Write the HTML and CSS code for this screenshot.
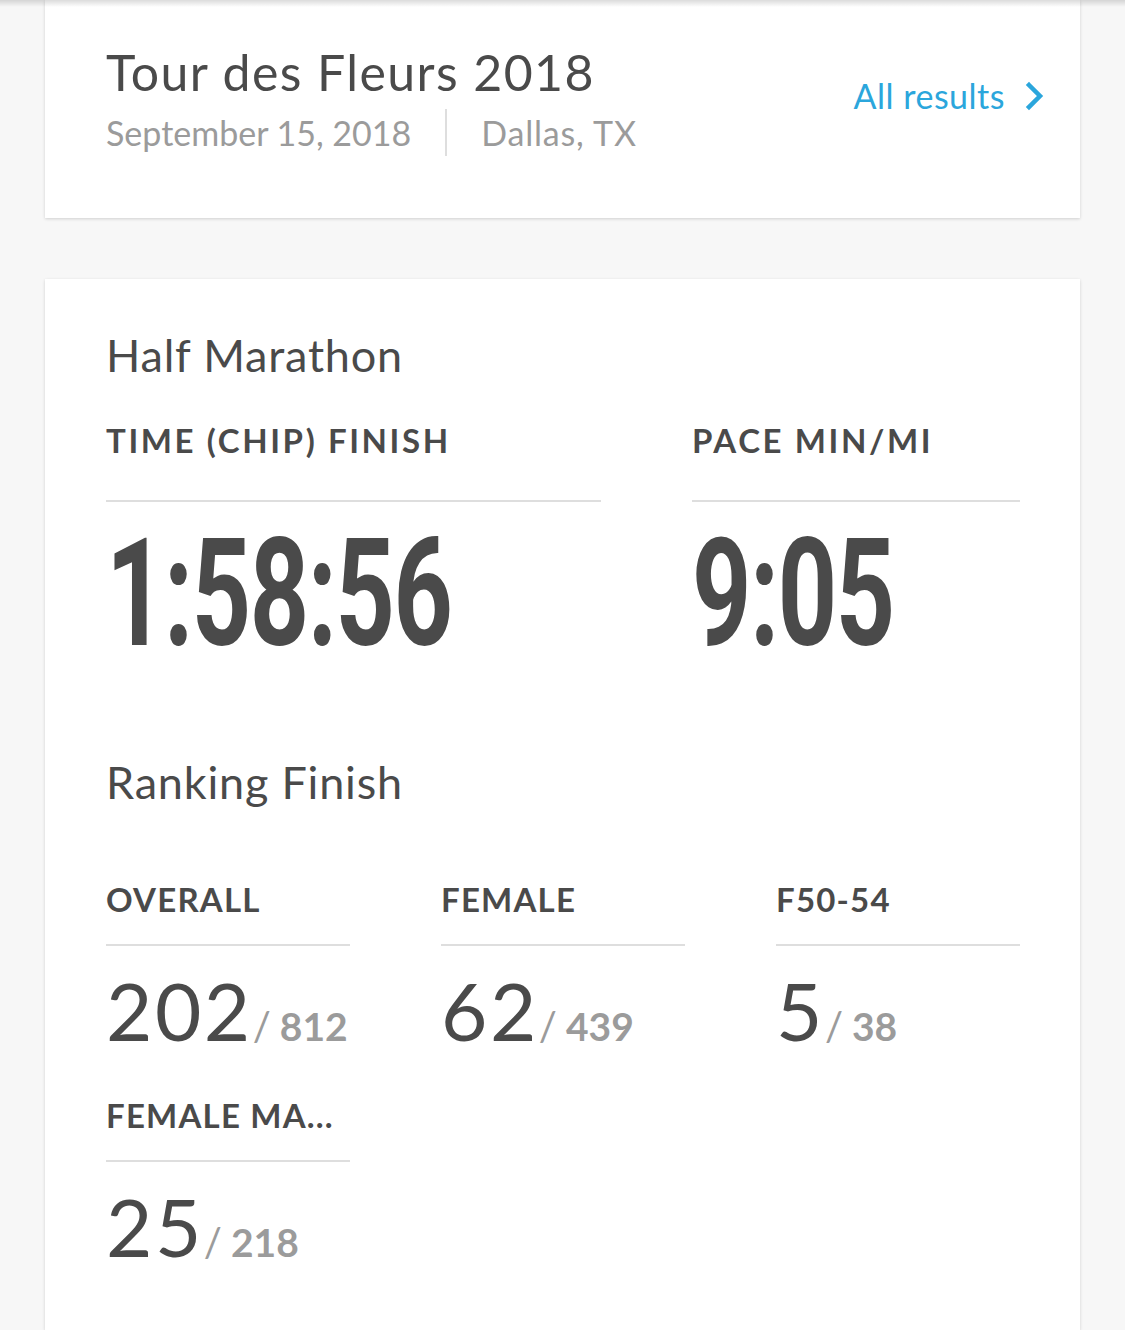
FILE: index.html
```html
<!DOCTYPE html>
<html lang="en">
<head>
<meta charset="utf-8">
<title>Tour des Fleurs 2018 – Results</title>
<link rel="stylesheet" href="styles.css">
</head>
<body>
<div class="top-shade"></div>
<main class="page">
  <section class="card event">
    <div class="event-info">
      <h1 class="event-title">Tour des Fleurs 2018</h1>
      <div class="event-meta">
        <span class="meta-item">September 15, 2018</span>
        <span class="meta-sep"></span>
        <span class="meta-item">Dallas, TX</span>
      </div>
    </div>
    <a class="all-results" href="#">All results
      <svg class="chev" width="20" height="30" viewBox="0 0 20 30" aria-hidden="true"><path d="M4 4 L15 15 L4 26" fill="none" stroke="currentColor" stroke-width="4.5" stroke-linecap="square" stroke-linejoin="miter"/></svg>
    </a>
  </section>

  <section class="card results">
    <h2 class="section-title">Half Marathon</h2>
    <div class="time-grid">
      <div class="stat">
        <div class="stat-label">TIME (CHIP) FINISH</div>
        <div class="big-value"><span class="squeeze">1:58:56</span></div>
      </div>
      <div class="stat">
        <div class="stat-label">PACE MIN/MI</div>
        <div class="big-value"><span class="squeeze">9:05</span></div>
      </div>
    </div>

    <h2 class="section-title ranking-title">Ranking Finish</h2>
    <div class="rank-grid">
      <div class="rank">
        <div class="stat-label">OVERALL</div>
        <div class="rank-value"><span class="place">202</span><span class="slash">/</span><span class="total">812</span></div>
      </div>
      <div class="rank">
        <div class="stat-label">FEMALE</div>
        <div class="rank-value"><span class="place">62</span><span class="slash">/</span><span class="total">439</span></div>
      </div>
      <div class="rank">
        <div class="stat-label">F50-54</div>
        <div class="rank-value"><span class="place">5</span><span class="slash">/</span><span class="total">38</span></div>
      </div>
      <div class="rank">
        <div class="stat-label">FEMALE MA...</div>
        <div class="rank-value"><span class="place">25</span><span class="slash">/</span><span class="total">218</span></div>
      </div>
    </div>
  </section>
</main>
</body>
</html>
```
FILE: styles.css
```css
html, body {
  margin: 0;
  padding: 0;
}
body {
  background: #f7f7f7;
  font-family: "Lato", "Open Sans", sans-serif;
  color: #4a4a4a;
  overflow: hidden;
}
.top-shade {
  position: absolute;
  left: 0;
  right: 0;
  top: 0;
  height: 7px;
  background: linear-gradient(rgba(0,0,0,0.14), rgba(0,0,0,0));
  z-index: 2;
}
.page {
  padding: 0 45px;
  display: flex;
  flex-direction: column;
  gap: 61px;
  height: 100vh;
  box-sizing: border-box;
}
.card {
  background: #fff;
  box-shadow: 0 1px 3px rgba(0,0,0,0.16);
}
.event {
  height: 218px;
  flex-shrink: 0;
  box-sizing: border-box;
  display: flex;
  justify-content: space-between;
  align-items: flex-start;
  padding: 42px 35px 0 61px;
}
.event-title {
  margin: 0;
  font-weight: 400;
  font-size: 50px;
  line-height: 60px;
  letter-spacing: 1.4px;
  color: #4a4a4a;
}
.event-meta {
  display: flex;
  align-items: center;
  gap: 34px;
  margin-top: 6px;
  height: 48px;
}
.meta-item {
  font-size: 34px;
  color: #9b9b9b;
}
.meta-item + .meta-sep + .meta-item {
  letter-spacing: 0.8px;
}
.meta-sep {
  width: 2px;
  height: 47px;
  background: #dedede;
}
.all-results {
  display: flex;
  align-items: center;
  gap: 20px;
  margin-top: 34px;
  font-size: 34px;
  line-height: 40px;
  letter-spacing: 0.5px;
  color: #2ba6dc;
  text-decoration: none;
}
.chev {
  display: block;
}
.results {
  flex: 1;
  min-height: 0;
  overflow: hidden;
  padding: 48px 61px 0;
}
.section-title {
  margin: 0;
  font-weight: 400;
  font-size: 45px;
  line-height: 56px;
  letter-spacing: 0.8px;
  color: #4a4a4a;
}
.time-grid {
  display: grid;
  grid-template-columns: 495px 328px;
  column-gap: 91px;
  margin-top: 37px;
}
.stat-label {
  font-weight: 700;
  font-size: 33px;
  line-height: 40px;
  letter-spacing: 2.6px;
  color: #4a4a4a;
  padding-bottom: 40px;
  border-bottom: 2px solid #dedede;
  white-space: nowrap;
}
.big-value {
  height: 190px;
  padding-top: 17px;
  box-sizing: border-box;
}
.squeeze {
  display: inline-block;
  font-family: "Roboto", sans-serif;
  font-weight: 700;
  font-size: 150px;
  line-height: 150px;
  color: #4a4a4a;
  transform: scaleX(0.69);
  transform-origin: left center;
  letter-spacing: -2px;
}
.ranking-title {
  margin-top: 62px;
}
.rank-grid {
  display: grid;
  grid-template-columns: repeat(3, 244px);
  column-gap: 91px;
  row-gap: 43px;
  margin-top: 69px;
}
.rank .stat-label {
  padding-bottom: 25px;
  letter-spacing: 1.2px;
}
.rank-value {
  margin-top: 22px;
  display: flex;
  align-items: baseline;
  white-space: nowrap;
}
.place {
  font-size: 80px;
  line-height: 84px;
  letter-spacing: 2.5px;
  color: #4a4a4a;
}
.slash {
  font-size: 40px;
  font-weight: 400;
  color: #9b9b9b;
  margin-right: 9px;
}
.total {
  font-size: 39px;
  font-weight: 700;
  color: #9b9b9b;
}
```
